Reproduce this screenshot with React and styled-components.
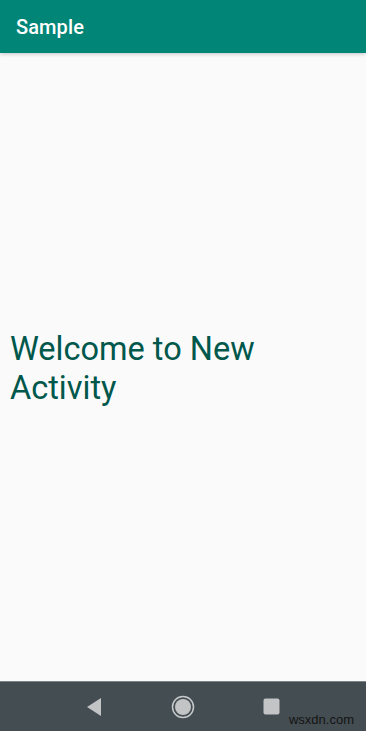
import React from "react";
import styled, { createGlobalStyle } from "styled-components";

const Global = createGlobalStyle`
  html, body { margin: 0; padding: 0; height: 100%; }
  body { background: #fafafa; font-family: Roboto, "Noto Sans", sans-serif; }
  #root { height: 100%; }
`;

const Screen = styled.div`
  width: 366px;
  height: 731px;
  display: flex;
  flex-direction: column;
  background: #fafafa;
  overflow: hidden;
`;

const AppBar = styled.header`
  position: relative;
  z-index: 1;
  height: 53px;
  flex: none;
  display: flex;
  align-items: center;
  padding: 0 16px;
  background: #008577;
  box-shadow: 0 1px 4px rgba(0, 0, 0, 0.22);
`;

const Title = styled.h1`
  margin: 0;
  padding-top: 1px;
  font-family: Roboto, sans-serif;
  font-weight: 500;
  font-size: 20px;
  color: #ffffff;
  letter-spacing: 0.1px;
`;

const Content = styled.main`
  flex: 1;
  display: flex;
  align-items: center;
  padding: 4px 10px 0 10px;
`;

const Welcome = styled.p`
  margin: 0;
  font-family: Roboto, sans-serif;
  font-weight: 400;
  font-size: 32.5px;
  line-height: 39px;
  color: #00574b;
  width: 260px;
`;

const NavBar = styled.nav`
  position: relative;
  height: 49px;
  flex: none;
  display: flex;
  align-items: center;
  justify-content: center;
  background: #444d52;
  border-top: 1px solid #7d8488;
`;

const NavButtons = styled.div`
  display: flex;
  align-items: center;
`;

const NavSlot = styled.div`
  width: 88px;
  display: flex;
  justify-content: center;
  align-items: center;
`;

const Watermark = styled.span`
  position: absolute;
  right: 12px;
  bottom: 4px;
  font-family: "Liberation Sans", Arial, sans-serif;
  font-size: 13px;
  color: #141414;
`;

export default function App() {
  return (
    <>
      <Global />
      <Screen>
        <AppBar>
          <Title>Sample</Title>
        </AppBar>
        <Content>
          <Welcome>Welcome to New Activity</Welcome>
        </Content>
        <NavBar>
          <NavButtons>
            <NavSlot>
              <svg width="16" height="20" viewBox="0 0 16 20" style={{ marginLeft: -2 }}>
                <path d="M15 1 L15 19 L1 10 Z" fill="#c2c4c5" />
              </svg>
            </NavSlot>
            <NavSlot>
              <svg width="24" height="24" viewBox="0 0 24 24">
                <circle cx="12" cy="12" r="10.5" fill="none" stroke="#c7c9ca" strokeWidth="1.5" />
                <circle cx="12" cy="12" r="8" fill="#c2c4c5" />
              </svg>
            </NavSlot>
            <NavSlot>
              <svg width="17" height="17" viewBox="0 0 17 17">
                <rect x="0.5" y="0.5" width="16" height="16" rx="2" fill="#c2c4c5" />
              </svg>
            </NavSlot>
          </NavButtons>
          <Watermark>wsxdn.com</Watermark>
        </NavBar>
      </Screen>
    </>
  );
}
